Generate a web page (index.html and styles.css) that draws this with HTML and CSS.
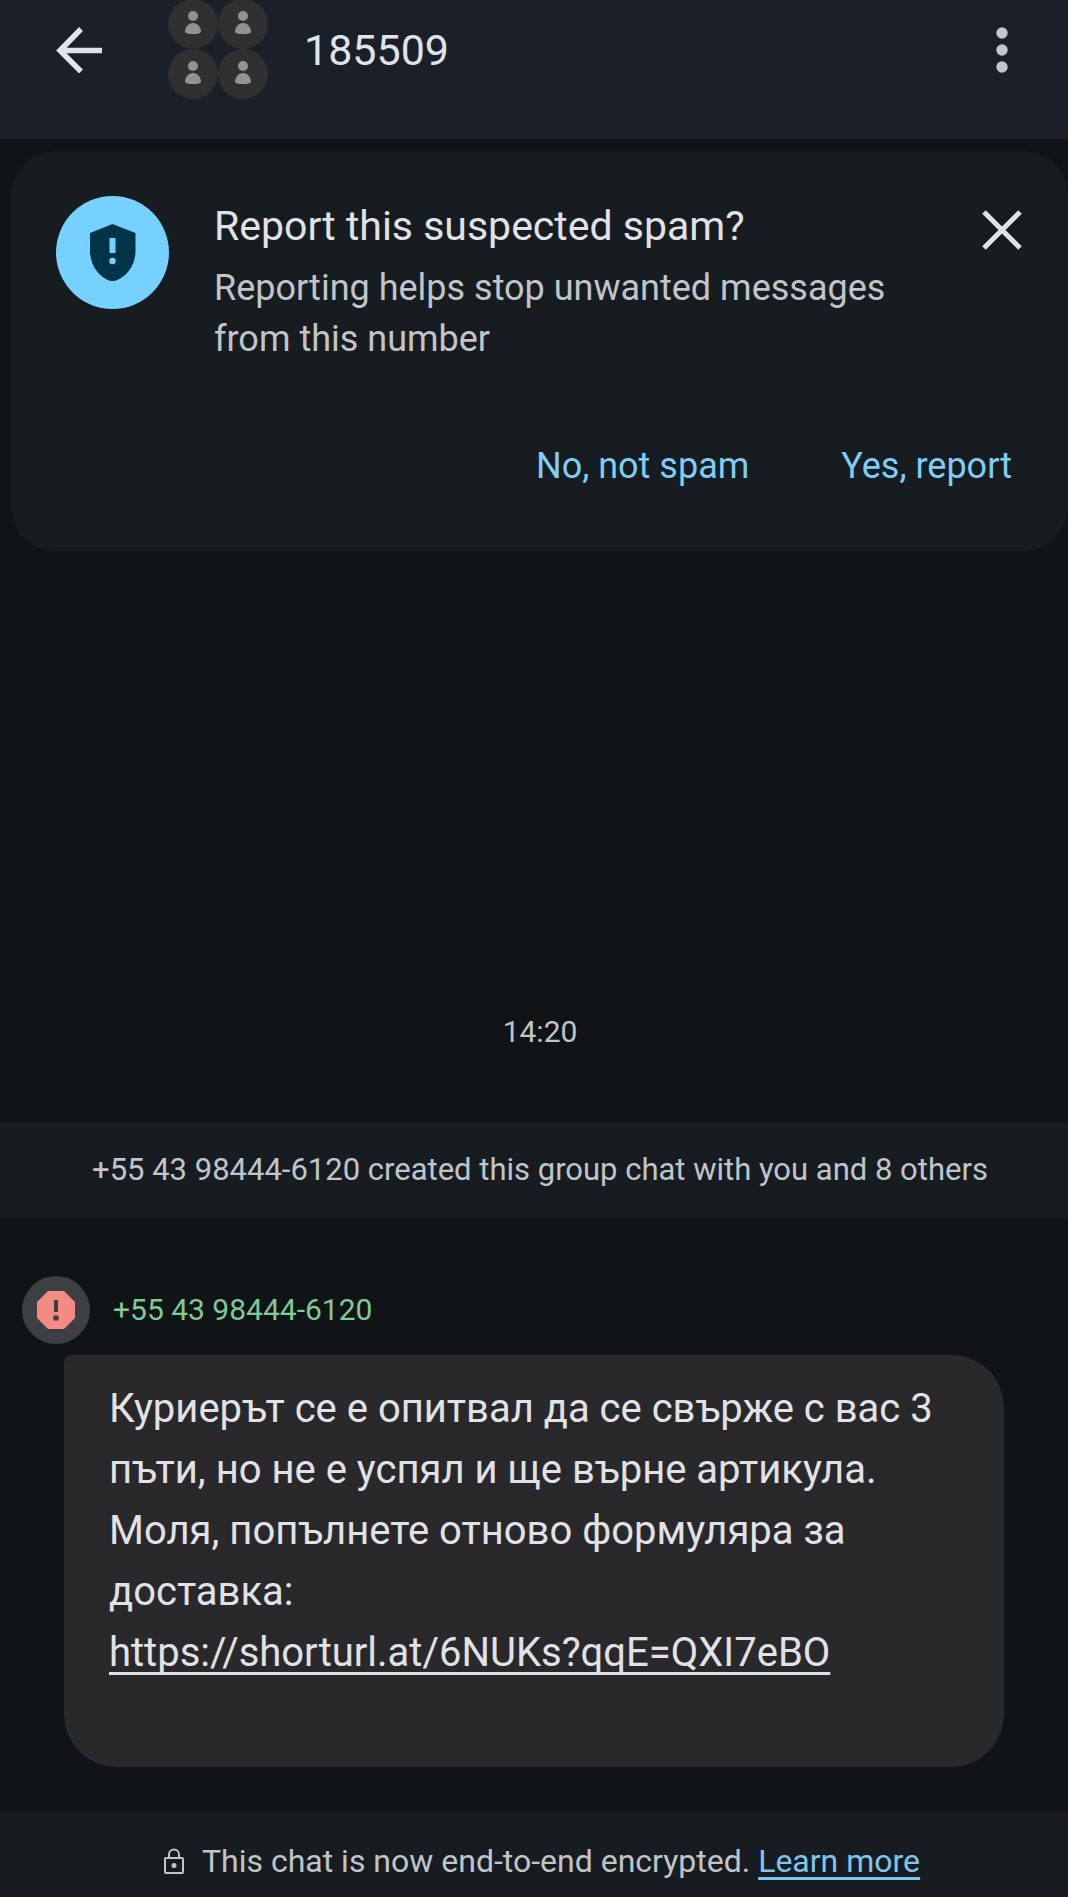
FILE: index.html
```html
<!DOCTYPE html>
<html lang="en">
<head>
<meta charset="utf-8">
<meta name="viewport" content="width=device-width, initial-scale=1">
<title>185509</title>
<link rel="stylesheet" href="styles.css">
</head>
<body>
<svg class="defs" aria-hidden="true">
  <symbol id="person" viewBox="0 0 50 50">
    <circle cx="25" cy="17" r="5"/>
    <path d="M17 33c0-5 3.500-9 8-9s8 4 8 9c-1 1.500-3 2-8 2s-7-.5-8-2z"/>
  </symbol>
</svg>
<header class="topbar">
  <button class="icon-button back" aria-label="Back">
    <svg width="46" height="46" viewBox="0 0 46 46" fill="none" stroke="currentColor" stroke-width="5.500"><path d="M46 23.500H6M25 2 4 23.500l21 21"/></svg>
  </button>
  <div class="group-avatar">
    <svg class="member"><use href="#person"/></svg>
    <svg class="member"><use href="#person"/></svg>
    <svg class="member"><use href="#person"/></svg>
    <svg class="member"><use href="#person"/></svg>
  </div>
  <h1 class="title">185509</h1>
  <button class="icon-button more" aria-label="More options">
    <svg width="12" height="46" viewBox="0 0 12 46" fill="currentColor"><circle cx="6" cy="6" r="5.700"/><circle cx="6" cy="23" r="5.700"/><circle cx="6" cy="40" r="5.700"/></svg>
  </button>
</header>

<main class="chat">
  <section class="spam-card">
    <div class="spam-info">
      <div class="shield">
        <svg width="46" height="57" viewBox="0 0 46 57"><path fill="#003549" d="M22.500 0 45.500 9v18c0 15-9.500 26-19.500 29.500q-3.500 1-7 0C9.500 53 0 42 0 27V9z"/><path fill="#76d1ff" d="M19.500 14h6v15h-6z"/><circle fill="#76d1ff" cx="22.500" cy="37" r="3.200"/></svg>
      </div>
      <div class="spam-text">
        <h2 class="spam-title">Report this suspected spam?</h2>
        <p class="spam-body">Reporting helps stop unwanted messages from this number</p>
      </div>
      <button class="icon-button close" aria-label="Close">
        <svg width="40" height="40" viewBox="0 0 40 40" fill="none" stroke="currentColor" stroke-width="5"><path d="m2 2 36 36M38 2 2 38"/></svg>
      </button>
    </div>
    <div class="spam-actions">
      <button class="text-button">No, not spam</button>
      <button class="text-button">Yes, report</button>
    </div>
  </section>

  <section class="messages">
    <time class="time">14:20</time>
    <p class="notice">+55 43 98444-6120 created this group chat with you and 8 others</p>
    <article class="message">
      <div class="sender">
        <div class="sender-avatar">
          <svg width="38" height="38" viewBox="0 0 38 38"><path fill="#f28b82" d="M11 0h16l11 11v16L27 38H11L0 27V11z"/><path fill="#3c4043" d="M17 9h4v12h-4z"/><circle fill="#3c4043" cx="19" cy="27" r="2.800"/></svg>
        </div>
        <span class="sender-name">+55 43 98444-6120</span>
      </div>
      <p class="bubble">Куриерът се е опитвал да се свърже с вас 3 пъти, но не е успял и ще върне артикула. Моля, попълнете отново формуляра за доставка:<br><a class="bubble-link" href="#">https://shorturl.at/6NUKs?qqE=QXI7eBO</a></p>
    </article>
  </section>
</main>

<footer class="encryption">
  <svg width="20" height="26" viewBox="0 0 20 26" fill="none" stroke="currentColor" stroke-width="2"><rect x="1" y="10" width="18" height="15" rx="1"/><path d="M5 10V6.500a5 5 0 0 1 10 0V10"/><circle cx="10" cy="17.500" r="2.500" fill="currentColor" stroke="none"/></svg>
  <p class="encryption-text">This chat is now end-to-end encrypted. <a class="learn-more" href="#">Learn more</a></p>
</footer>
</body>
</html>
```
FILE: styles.css
```css
* { box-sizing: border-box; }
body {
  margin: 0;
  min-height: 100vh;
  display: flex;
  flex-direction: column;
  background: #101416;
  color: #e1e2e5;
  font-family: Roboto, "Noto Sans", sans-serif;
}
h1, h2, p { margin: 0; font-weight: 400; }
button {
  padding: 0;
  border: 0;
  background: none;
  color: inherit;
  font: inherit;
  cursor: pointer;
}
svg { display: block; flex: none; }
.defs { position: absolute; width: 0; height: 0; }

.topbar {
  display: flex;
  align-items: center;
  padding: 0 60px 40px 56px;
  background: #1b1f27;
  color: #dfe3ec;
}
.group-avatar {
  display: grid;
  grid-template-columns: 50px 50px;
  margin: -1px 36px 0 66px;
}
.member {
  width: 50px;
  height: 50px;
  border-radius: 50%;
  background: #303030;
  fill: #929292;
}
.title { flex: 1; font-size: 43px; line-height: 52px; }
.more { color: #c3c6d0; }

.chat { flex: 1; display: flex; flex-direction: column; }
.spam-card {
  margin: 12px 0 0 11px;
  padding: 45px 46px 59px 45px;
  border-radius: 45px;
  background: #171c20;
}
.spam-info { display: flex; align-items: flex-start; }
.shield {
  flex: none;
  display: grid;
  place-items: center;
  width: 113px;
  height: 113px;
  margin-right: 45px;
  border-radius: 50%;
  background: #76d1ff;
}
.spam-text { flex: 1; }
.spam-title { margin-bottom: 7px; font-size: 41px; line-height: 60px; }
.spam-body { max-width: 690px; font-size: 36px; line-height: 51px; color: #c0c5ca; }
.close { margin-top: 14px; }
.spam-actions {
  display: flex;
  justify-content: flex-end;
  gap: 92px;
  margin-top: 76px;
  padding-right: 10px;
}
.text-button { font-size: 36px; line-height: 51px; color: #7fcdf8; }

.messages {
  flex: 1;
  display: flex;
  flex-direction: column;
  justify-content: flex-end;
  padding-bottom: 45px;
}
.time {
  margin-bottom: 66px;
  padding-left: 12px;
  font-size: 30px;
  line-height: 48px;
  text-align: center;
  color: #c0c5ca;
}
.notice {
  padding: 24px 12px 24px 24px;
  background: #171c20;
  font-size: 31px;
  line-height: 48px;
  text-align: center;
  color: #c0c5ca;
}
.message { margin: 58px 64px 0 22px; }
.sender { display: flex; align-items: center; gap: 23px; margin-bottom: 11px; }
.sender-avatar {
  display: grid;
  place-items: center;
  width: 68px;
  height: 68px;
  border-radius: 50%;
  background: #3c4043;
}
.sender-name { font-size: 30px; line-height: 48px; color: #81c995; }
.bubble {
  margin-left: 42px;
  padding: 23px 45px 84px;
  border-radius: 8px 53px 53px 53px;
  background: #29292b;
  font-size: 40px;
  line-height: 61px;
}
.bubble-link {
  color: inherit;
  text-decoration-thickness: 3px;
  text-underline-offset: 6px;
  text-decoration-skip-ink: none;
}

.encryption {
  display: flex;
  justify-content: center;
  align-items: center;
  gap: 18px;
  padding: 25px 0 12px 16px;
  background: #171c20;
  color: #c0c5ca;
}
.encryption-text { font-size: 32px; line-height: 48px; }
.learn-more {
  color: #7fc6ef;
  text-decoration-thickness: 3px;
  text-underline-offset: 5px;
  text-decoration-skip-ink: none;
}
```
